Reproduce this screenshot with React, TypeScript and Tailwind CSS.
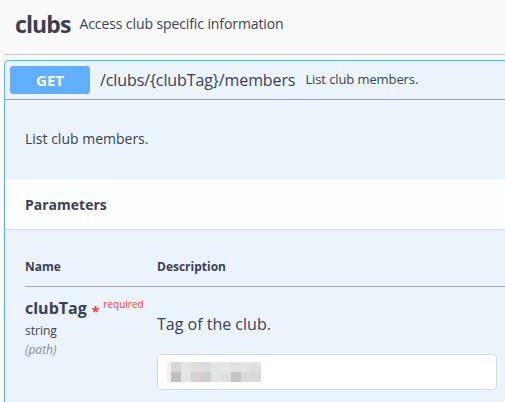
const mosaic = [
  ["#f3f2ee", "#d7d7d3", "#e5e5e5", "#e3ddda", "#d9dee0", "#e6e3e3", "#e5e7e5", "#e0e1e0", "#e3e3e3", "#e0e0de"],
  ["#f2f1ee", "#c4bec3", "#e4e6e5", "#d7d2cd", "#c9d1d2", "#e1e3e6", "#e0e0df", "#c5c5c3", "#dadad8", "#d9d9d8"],
];

export default function App() {
  return (
    <div className="h-screen overflow-hidden bg-[#fafafa] pl-[4px] font-['Open_Sans',sans-serif] text-[#3b4151]">
      <div className="w-[560px]">
        <div className="flex h-[55px] items-start gap-[9px] border-b border-[#c6c6c6] pl-[11px] pt-[9px]">
          <h2 className="text-[23px] font-bold leading-[30px] tracking-[-0.9px]">clubs</h2>
          <p className="mt-[5px] text-[14px] leading-[20px] tracking-[-0.1px]">Access club specific information</p>
        </div>

        <div className="mt-[5px] rounded-l-[4px] border border-[#61affe] bg-[#ebf3fb]">
          <div className="flex items-center border-b border-[#61affe] p-[5px]">
            <span className="flex h-[28px] w-[80px] items-center justify-center rounded-[3px] bg-[#61affe] text-[15px] font-bold text-white">
              GET
            </span>
            <span className="ml-[10px] text-[16px] tracking-[-0.1px]">/clubs/{"{clubTag}"}/members</span>
            <span className="ml-[10px] text-[13px] tracking-[-0.1px]">List club members.</span>
          </div>

          <div className="px-[20px] pb-[30px] pt-[28px] text-[14px]">List club members.</div>

          <div className="flex h-[50px] items-center bg-[#fbfdff] px-[20px] shadow-[0_1px_2px_rgba(0,0,0,0.1)]">
            <h4 className="text-[14px] font-bold">Parameters</h4>
          </div>

          <div className="px-[20px] pt-[29px]">
            <div className="flex border-b border-[#a3a8b3] pb-[10px] text-[12px] font-bold">
              <div className="w-[132px]">Name</div>
              <div>Description</div>
            </div>
            <div className="flex pb-[40px] pt-[10px]">
              <div className="w-[132px]">
                <div className="flex items-start">
                  <span className="text-[16px] font-bold leading-[22px]">clubTag</span>
                  <span className="ml-[5px] mt-[4px] text-[14px] font-bold text-[#f93e3e]">*</span>
                  <span className="ml-[4px] mt-[0px] text-[10px] text-[#f93e3e]">required</span>
                </div>
                <div className="text-[12px] leading-[17px]">string</div>
                <div className="mt-[2px] text-[12px] leading-[17px] italic text-[#8a8d94]">(path)</div>
              </div>
              <div className="flex-1">
                <p className="mt-[15px] text-[16px]">Tag of the club.</p>
                <div className="mt-[18px] flex h-[36px] w-[340px] items-center rounded-[4px] border border-[#d9d9d9] bg-white pl-[9px]">
                  <div className="flex flex-col">
                    {mosaic.map((row, i) => (
                      <div key={i} className="flex">
                        {row.map((c, j) => (
                          <span
                            key={j}
                            className={j === 0 ? "h-[10px] w-[4px]" : "h-[10px] w-[10px]"}
                            style={{ backgroundColor: c }}
                          />
                        ))}
                      </div>
                    ))}
                  </div>
                </div>
              </div>
            </div>
          </div>
        </div>
      </div>
    </div>
  );
}
